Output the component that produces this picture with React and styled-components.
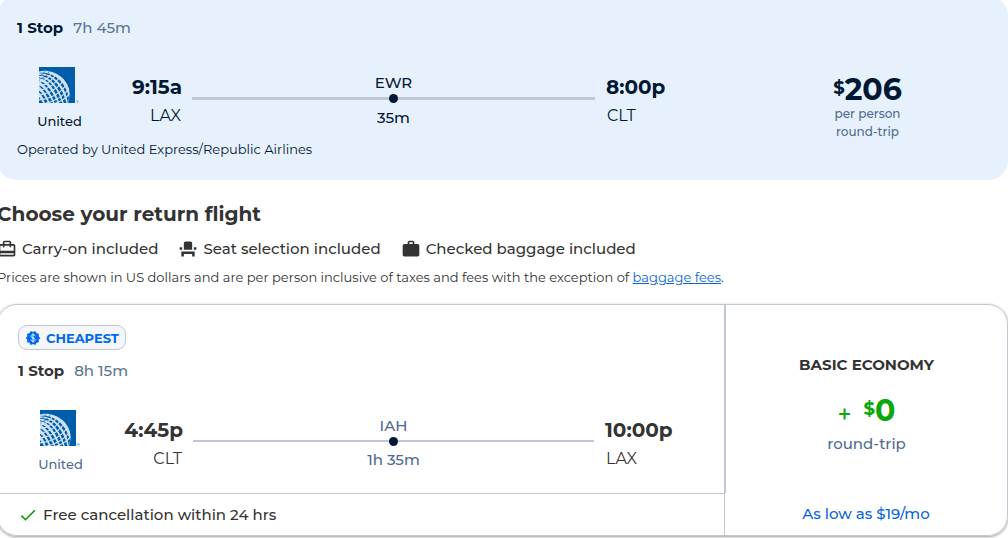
import React from "react";
import styled, { createGlobalStyle } from "styled-components";
import { MdCardTravel, MdCheck, MdEventSeat, MdWork } from "react-icons/md";

const outbound = {
  stops: "1 Stop",
  duration: "7h 45m",
  depart: { time: "9:15a", code: "LAX" },
  arrive: { time: "8:00p", code: "CLT" },
  layover: { code: "EWR", time: "35m" },
};

const inbound = {
  stops: "1 Stop",
  duration: "8h 15m",
  depart: { time: "4:45p", code: "CLT" },
  arrive: { time: "10:00p", code: "LAX" },
  layover: { code: "IAH", time: "1h 35m" },
};

const perks = [
  { icon: MdCardTravel, label: "Carry-on included" },
  { icon: MdEventSeat, label: "Seat selection included" },
  { icon: MdWork, label: "Checked baggage included" },
];

const UnitedLogo = () => (
  <Logo viewBox="0 0 42 36" role="img" aria-label="United logo">
    <defs>
      <clipPath id="globe">
        <path d="M0 4.500C14 1 31 12 30.500 28q-.2 4-1.500 8H0z" />
      </clipPath>
    </defs>
    <path fill="#005daa" d="M0 0h36v36H0z" />
    <g clipPath="url(#globe)">
      <path fill="#cfe2f4" d="M0 0h36v36H0z" />
      {/* gaps between meridians, widening away from the pole */}
      <g fill="#005daa">
        <path d="M0 6C14 4 27 15 30 31L28.800 36C27 19 14 6 0 6.300z" />
        <path d="M0 8C12 7 23 18 27.500 36H24.800C20 20 11 9 0 8.400z" />
        <path d="M0 10.500C10 11 19 22 23.300 36H20.300C16 23 9 12 0 11z" />
        <path d="M0 13.500C8 16 14 25 18.800 36H15.500C12 27 7 18 0 14.300z" />
        <path d="M0 18C6 21 10 28 14 36H10.800C8 29 5 23 0 19.200z" />
        <path d="M0 23.500C4 26 6 30 9 36H5.800C4 31 3 28 0 25.300z" />
        <path d="M0 30q2 2 4 6H0z" />
      </g>
      {/* parallels */}
      <g fill="none" stroke="#005daa" strokeWidth=".5">
        <path d="M-1 9Q4 9 7 3" />
        <path d="M-1 12Q7 12 11 3" />
      </g>
      <g fill="none" stroke="#cfe2f4" strokeWidth="1.200">
        <path d="M-1 15Q9 15 14 3" />
        <path d="M-1 19Q12 18 18 5" />
        <path d="M-1 23.500Q14 22 22 8" />
        <path d="M-1 28Q17 26 26 11" />
        <path d="M-1 33Q20 31 29 15" />
        <path d="M3 37Q22 34 31 20" />
        <path d="M14 37Q25 34 31 26" />
      </g>
    </g>
    <circle cx="38.500" cy="34.500" r="1.200" fill="#8db8de" />
  </Logo>
);

const DealIcon = () => (
  <svg width="16" height="16" viewBox="0 0 24 24" aria-hidden="true">
    <path
      fill="#0068ef"
      d="m23 12-2.440-2.790.340-3.690-3.610-.820L15.400 1.500 12 2.960 8.600 1.500 6.710 4.690 3.100 5.500l.340 3.700L1 12l2.440 2.790-.340 3.700 3.610.820L8.600 22.500l3.400-1.470 3.400 1.460 1.890-3.190 3.610-.820-.340-3.690z"
    />
    <path
      fill="none"
      stroke="#fff"
      strokeWidth="1.400"
      d="M12 5v14M15.200 9.300c0-1.400-1.400-2.100-3.200-2.100s-3 .9-3 2.300c0 3.300 6.300 1.700 6.300 5 0 1.400-1.400 2.300-3.300 2.300s-3.300-.9-3.300-2.400"
    />
  </svg>
);

const Leg = ({ flight, thick, muted }) => (
  <>
    <Summary>
      <strong>{flight.stops}</strong>
      <Duration>{flight.duration}</Duration>
    </Summary>
    <LegRow>
      <Airline $muted={muted}>
        <UnitedLogo />
        <span>United</span>
      </Airline>
      <Stop $align="right">
        <Time>{flight.depart.time}</Time>
        <Airport>{flight.depart.code}</Airport>
      </Stop>
      <Route $muted={muted}>
        <span>{flight.layover.code}</span>
        <Track $thick={thick}>
          <Dot />
        </Track>
        <span>{flight.layover.time}</span>
      </Route>
      <Stop $align="left">
        <Time>{flight.arrive.time}</Time>
        <Airport>{flight.arrive.code}</Airport>
      </Stop>
    </LegRow>
  </>
);

const App = () => {
  return (
    <>
      <GlobalStyle />
      <Page>
        <OutboundCard>
          <Trip>
            <Leg flight={outbound} thick />
            <Operated>Operated by United Express/Republic Airlines</Operated>
          </Trip>
          <OutboundPrice>
            <Price>
              <sup>$</sup>206
            </Price>
            <PriceNote>per person</PriceNote>
            <PriceNote>round-trip</PriceNote>
          </OutboundPrice>
        </OutboundCard>

        <Title>Choose your return flight</Title>
        <Perks>
          {perks.map(({ icon: Icon, label }) => (
            <li key={label}>
              <Icon size={20} aria-hidden="true" />
              {label}
            </li>
          ))}
        </Perks>
        <Disclaimer>
          Prices are shown in US dollars and are per person inclusive of taxes
          and fees with the exception of <a href="#baggage">baggage fees</a>.
        </Disclaimer>

        <ReturnCard>
          <ReturnTrip>
            <Badge>
              <DealIcon />
              CHEAPEST
            </Badge>
            <Leg flight={inbound} muted />
          </ReturnTrip>
          <Fare>
            <FareName>BASIC ECONOMY</FareName>
            <FarePrice>
              <Plus>+</Plus>
              <Price>
                <sup>$</sup>0
              </Price>
            </FarePrice>
            <FareNote>round-trip</FareNote>
          </Fare>
          <Cancellation>
            <MdCheck size={20} color="#0a9f0a" aria-hidden="true" />
            Free cancellation within 24 hrs
          </Cancellation>
          <Financing>
            <button type="button">As low as $19/mo</button>
          </Financing>
        </ReturnCard>
      </Page>
    </>
  );
};

export default App;

const GlobalStyle = createGlobalStyle`
  * {
    box-sizing: border-box;
  }
  body {
    margin: 0;
    background: #fff;
    color: #333;
    font-family: Montserrat, Inter, "Liberation Sans", sans-serif;
    font-size: 15px;
    font-weight: 500;
    line-height: 20px;
  }
`;

const Page = styled.main`
  overflow: hidden;
  padding-bottom: 2px;

  > * {
    margin-left: -3px;
  }
`;

const OutboundCard = styled.section`
  display: grid;
  grid-template-columns: 1fr 283px;
  margin-top: -4px;
  border-radius: 20px;
  background: #e7f1fe;
  color: #001833;
`;

const Trip = styled.div`
  padding: 22px 17px 21px 20px;
`;

const Summary = styled.div`
  display: flex;
  gap: 10px;

  strong {
    font-weight: 700;
  }
`;

const Duration = styled.span`
  color: #5c7591;
`;

const LegRow = styled.div`
  display: grid;
  grid-template-columns: 85px 80px 1fr 102px;
  margin-top: 29px;
`;

const Airline = styled.div`
  display: flex;
  flex-direction: column;
  align-items: center;
  gap: 9px;
  font-size: 13px;
  line-height: 18px;
  color: ${({ $muted }) => ($muted ? "#4f6a8f" : "inherit")};
`;

const Logo = styled.svg`
  width: 42px;
  height: 36px;
`;

const Stop = styled.div`
  display: flex;
  flex-direction: column;
  gap: 7px;
  padding-top: 8px;
  text-align: ${({ $align }) => $align};
`;

const Time = styled.span`
  font-size: 20px;
  font-weight: 700;
  line-height: 24px;
`;

const Airport = styled.span`
  padding: 0 1px;
  font-size: 16px;
  font-weight: 400;
`;

const Route = styled.div`
  display: flex;
  flex-direction: column;
  gap: 4px;
  padding: 6px 11px 0 10px;
  text-align: center;
  color: ${({ $muted }) => ($muted ? "#4f6a8f" : "inherit")};
`;

const Track = styled.div`
  display: flex;
  align-items: center;
  justify-content: center;
  height: ${({ $thick }) => ($thick ? "3px" : "2px")};
  margin-bottom: 4px;
  background: #bfc8d2;
`;

const Dot = styled.i`
  flex: none;
  width: 9px;
  height: 9px;
  border-radius: 50%;
  background: #001833;
`;

const Operated = styled.p`
  margin: 9px 0 0;
  font-size: 13px;
  font-weight: 400;
`;

const OutboundPrice = styled.div`
  display: flex;
  flex-direction: column;
  align-items: center;
  padding: 79px 0 0 2px;
`;

const Price = styled.div`
  display: flex;
  font-size: 30px;
  font-weight: 700;
  line-height: 30px;

  sup {
    font-size: 18px;
    line-height: 26px;
  }
`;

const PriceNote = styled.div`
  font-size: 12px;
  line-height: 18px;
  color: #4f6a8f;
`;

const Title = styled.h2`
  margin-top: 20px;
  margin-bottom: 0;
  font-size: 20px;
  font-weight: 700;
  line-height: 28px;
`;

const Perks = styled.ul`
  display: flex;
  gap: 20px;
  margin-top: 11px;
  margin-bottom: 0;
  padding: 0;
  list-style: none;

  li {
    display: flex;
    align-items: center;
    gap: 5px;
  }
`;

const Disclaimer = styled.p`
  margin-top: 9px;
  margin-bottom: 0;
  font-size: 13px;
  font-weight: 400;
  line-height: 18px;

  a {
    color: #0a66dc;
  }
`;

const ReturnCard = styled.section`
  display: grid;
  grid-template-columns: 1fr 283px;
  margin-top: 18px;
  border: 1px solid #bfc8d2;
  border-radius: 20px;
  box-shadow: 0 1px 3px rgba(0, 0, 0, 0.4);
`;

const ReturnTrip = styled.div`
  padding: 20px 17px 20px 20px;
`;

const Badge = styled.div`
  display: inline-flex;
  align-items: center;
  gap: 5px;
  height: 25px;
  margin-bottom: 11px;
  padding: 0 6px;
  border: 1px solid #bfc8d2;
  border-radius: 9px;
  background: #f4f6f9;
  color: #0068ef;
  font-size: 13px;
  font-weight: 700;
`;

const Fare = styled.div`
  display: flex;
  flex-direction: column;
  align-items: center;
  padding-top: 50px;
  border-left: 2px solid #bfc8d2;
`;

const FareName = styled.div`
  font-weight: 700;
`;

const FarePrice = styled.div`
  display: flex;
  gap: 12px;
  margin-top: 21px;
  color: #0aa80a;
`;

const Plus = styled.span`
  font-size: 24px;
  line-height: 38px;
`;

const FareNote = styled.div`
  color: #4f6a8f;
`;

const Cancellation = styled.div`
  display: flex;
  align-items: center;
  gap: 5px;
  height: 42px;
  padding-left: 20px;
  border-top: 1px solid #bfc8d2;
`;

const Financing = styled.div`
  display: flex;
  align-items: center;
  justify-content: center;
  border-left: 1px solid #bfc8d2;

  button {
    padding: 0;
    border: 0;
    background: none;
    color: #0a66dc;
    font: inherit;
    cursor: pointer;
  }
`;
